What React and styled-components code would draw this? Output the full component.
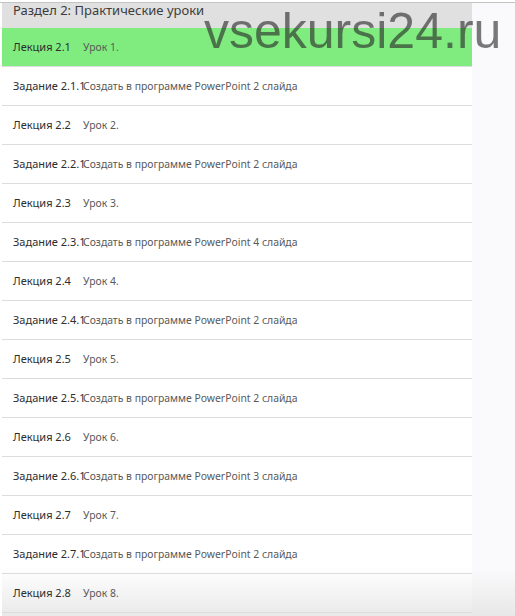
import React from "react";
import styled, { createGlobalStyle } from "styled-components";

const GlobalStyle = createGlobalStyle`
  html, body {
    margin: 0;
    padding: 0;
    background: #ffffff;
    overflow: hidden;
  }
  body {
    font-family: "Noto Sans", "Open Sans", sans-serif;
    height: 616px;
  }
`;

const lessons = [
  { label: "Лекция 2.1", title: "Урок 1.", active: true },
  { label: "Задание 2.1.1", title: "Создать в программе PowerPoint 2 слайда" },
  { label: "Лекция 2.2", title: "Урок 2." },
  { label: "Задание 2.2.1", title: "Создать в программе PowerPoint 2 слайда" },
  { label: "Лекция 2.3", title: "Урок 3." },
  { label: "Задание 2.3.1", title: "Создать в программе PowerPoint 4 слайда" },
  { label: "Лекция 2.4", title: "Урок 4." },
  { label: "Задание 2.4.1", title: "Создать в программе PowerPoint 2 слайда" },
  { label: "Лекция 2.5", title: "Урок 5." },
  { label: "Задание 2.5.1", title: "Создать в программе PowerPoint 2 слайда" },
  { label: "Лекция 2.6", title: "Урок 6." },
  { label: "Задание 2.6.1", title: "Создать в программе PowerPoint 3 слайда" },
  { label: "Лекция 2.7", title: "Урок 7." },
  { label: "Задание 2.7.1", title: "Создать в программе PowerPoint 2 слайда" },
  { label: "Лекция 2.8", title: "Урок 8." },
];

// soft grey shade at the very bottom of the page
const fade = "linear-gradient(rgba(224, 224, 224, 0) calc(100% - 48px), rgba(224, 224, 224, 0.7))";

const Page = styled.div`
  position: relative;
  display: flex;
  margin-top: 2px;
  border-top: 1px solid #c4c4c4;
  height: 613px;
  overflow: hidden;
`;

const List = styled.div`
  width: 470px;
  margin-left: 2px;
  display: flex;
  flex-direction: column;
  background: ${fade}, #ffffff;
`;

const Side = styled.div`
  flex: 1;
  background: ${fade}, #fafafc;
`;

const SectionHeader = styled.div`
  height: 25px;
  flex-shrink: 0;
  background: #e0e0e0;
  padding: 0 11px;
  font-size: 13px;
  line-height: 15px;
  color: #3c3c3c;
  box-sizing: border-box;
`;

const Row = styled.div`
  height: 39px;
  flex-shrink: 0;
  box-sizing: border-box;
  display: flex;
  align-items: center;
  padding: 0 11px 1px;
  border-bottom: 1px solid #dcdcdc;
  background: ${(p) => (p.$active ? "#80ec80" : "transparent")};
  white-space: nowrap;
`;

const Label = styled.span`
  width: 70px;
  flex-shrink: 0;
  font-size: 11px;
  color: #2e2e2e;
`;

const Title = styled.span`
  font-size: 10.4px;
  color: #595959;
`;

const Watermark = styled.div`
  position: absolute;
  left: 204px;
  top: 0;
  font-family: "Liberation Sans", Arial, sans-serif;
  font-size: 50px;
  line-height: 56px;
  color: rgba(40, 40, 40, 0.62);
  pointer-events: none;
`;

export default function App() {
  return (
    <>
      <GlobalStyle />
      <Page>
        <List>
          <SectionHeader>Раздел 2: Практические уроки</SectionHeader>
          {lessons.map((l) => (
            <Row key={l.label} $active={l.active}>
              <Label>{l.label}</Label>
              <Title>{l.title}</Title>
            </Row>
          ))}
        </List>
        <Side />
        <Watermark>vsekursi24.ru</Watermark>
      </Page>
    </>
  );
}
